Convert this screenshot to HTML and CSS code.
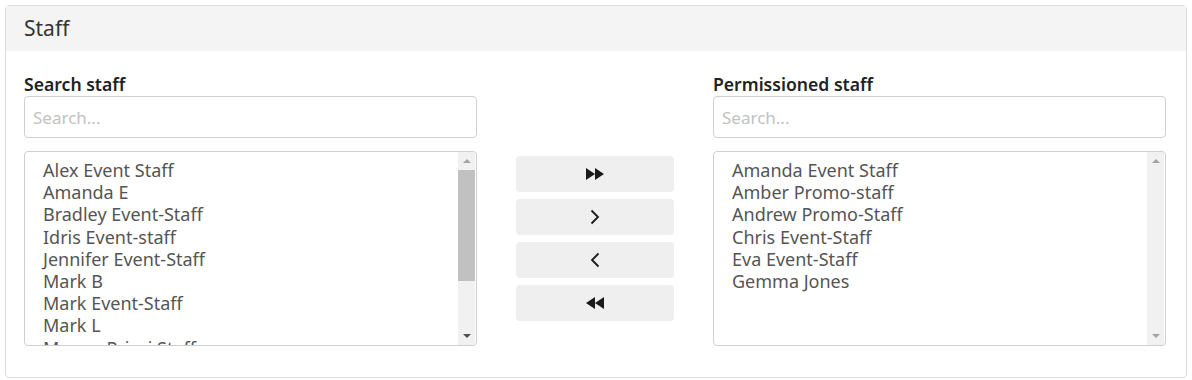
FILE: index.html
```html
<!DOCTYPE html>
<html lang="en">
<head>
    <meta charset="UTF-8">
    <title>Staff</title>
    <link rel="stylesheet" href="styles.css">
</head>
<body>

<div class="card">
    <div class="card-header">Staff</div>
    <div class="card-body">
        <!-- Available staff -->
        <div class="picker">
            <label class="picker-label">Search staff</label>
            <input type="text" class="search" placeholder="Search...">
            <div class="list">
                <ul class="items">
                    <li>Alex Event Staff</li>
                    <li>Amanda E</li>
                    <li>Bradley Event-Staff</li>
                    <li>Idris Event-staff</li>
                    <li>Jennifer Event-Staff</li>
                    <li>Mark B</li>
                    <li>Mark Event-Staff</li>
                    <li>Mark L</li>
                    <li>Megan Priori Staff</li>
                </ul>
                <div class="scrollbar">
                    <span class="arrow up"></span>
                    <div class="track"><div class="thumb"></div></div>
                    <span class="arrow down"></span>
                </div>
            </div>
        </div>

        <!-- Move buttons -->
        <div class="moves">
            <button class="move" title="Add all">
                <svg width="20" height="14" viewBox="0 0 20 14"><path d="M1 1 L10 7 L1 13 Z M10 1 L19 7 L10 13 Z" fill="#1a1a1a"/></svg>
            </button>
            <button class="move" title="Add">
                <svg width="12" height="16" viewBox="0 0 12 16"><path d="M2.5 1.5 L9 8 L2.5 14.5" fill="none" stroke="#1a1a1a" stroke-width="1.8"/></svg>
            </button>
            <button class="move" title="Remove">
                <svg width="12" height="16" viewBox="0 0 12 16"><path d="M9.5 1.5 L3 8 L9.5 14.5" fill="none" stroke="#1a1a1a" stroke-width="1.8"/></svg>
            </button>
            <button class="move" title="Remove all">
                <svg width="20" height="14" viewBox="0 0 20 14"><path d="M19 1 L10 7 L19 13 Z M10 1 L1 7 L10 13 Z" fill="#1a1a1a"/></svg>
            </button>
        </div>

        <!-- Permissioned staff -->
        <div class="picker">
            <label class="picker-label">Permissioned staff</label>
            <input type="text" class="search" placeholder="Search...">
            <div class="list">
                <ul class="items">
                    <li>Amanda Event Staff</li>
                    <li>Amber Promo-staff</li>
                    <li>Andrew Promo-Staff</li>
                    <li>Chris Event-Staff</li>
                    <li>Eva Event-Staff</li>
                    <li>Gemma Jones</li>
                </ul>
                <div class="scrollbar disabled">
                    <span class="arrow up"></span>
                    <div class="track"></div>
                    <span class="arrow down"></span>
                </div>
            </div>
        </div>
    </div>
</div>

</body>
</html>
```

FILE: styles.css
```css
body {
    margin: 5px;
    font-family: "Noto Sans", sans-serif;
    color: #222;
    background: #fff;
}
.card {
    border: 1px solid #dcdcdc;
    border-radius: 4px;
}
.card-header {
    background-color: #f4f4f4;
    height: 45px;
    padding: 0 18px;
    font-size: 21px;
    line-height: 45px;
    color: #333;
}
.card-body {
    display: grid;
    grid-template-columns: 453px 158px 453px;
    column-gap: 39px;
    padding: 24px 20px 31px 18px;
}
.picker-label {
    display: block;
    font-size: 17.6px;
    font-weight: 600;
    line-height: 19px;
    margin-bottom: 2px;
}
.search {
    display: block;
    box-sizing: border-box;
    width: 100%;
    height: 42px;
    padding: 0 8px;
    border: 1px solid #cfcfcf;
    border-radius: 4px;
    font-family: inherit;
    font-size: 17px;
    color: #333;
}
.search::placeholder {
    color: #c2c2c2;
}
.list {
    display: flex;
    height: 195px;
    box-sizing: border-box;
    margin-top: 13px;
    border: 1px solid #cfcfcf;
    border-radius: 4px;
    overflow: hidden;
}
.items {
    flex: 1;
    list-style: none;
    margin: 0;
    padding: 7px 0 0 18px;
    font-size: 18px;
    line-height: 22.2px;
    color: #555;
}
.scrollbar {
    width: 17px;
    margin-right: 1px;
    background: #f1f1f1;
    display: flex;
    flex-direction: column;
    align-items: center;
}
.track {
    flex: 1;
    width: 100%;
}
.thumb {
    height: 111px;
    background: #c1c1c1;
}
.arrow {
    width: 0;
    height: 0;
    margin: 7px 0;
    border-left: 4px solid transparent;
    border-right: 4px solid transparent;
}
.arrow.up {
    border-bottom: 4px solid #a3a3a3;
}
.arrow.down {
    border-top: 4px solid #505050;
}
.disabled .arrow.down {
    border-top-color: #a3a3a3;
}
.moves {
    display: flex;
    flex-direction: column;
    gap: 7px;
    padding-top: 81px;
}
.move {
    height: 36px;
    border: none;
    border-radius: 4px;
    background: #efefef;
    display: flex;
    align-items: center;
    justify-content: center;
    padding: 0;
}
```
